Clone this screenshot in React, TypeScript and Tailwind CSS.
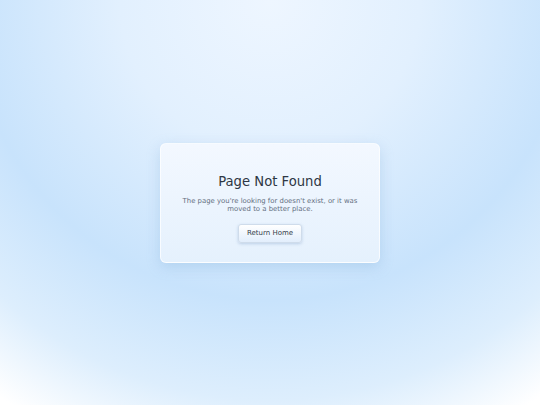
import * as React from "react";

/** 404 page — a single frosted card over a soft blue radial wash. */
export default function App() {
  return (
    <div className="flex min-h-screen w-full items-center justify-center bg-[radial-gradient(circle_at_50%_0%,#eef6ff_0px,#e2f0fe_150px,#c8e3fc_300px,#ddeefd_400px,#ffffff_480px)] font-['DejaVu_Sans',sans-serif]">
      <div className="flex w-[220px] flex-col items-center rounded-[6px] border border-white/70 bg-[linear-gradient(180deg,#f3f8ff_0%,#e5f1fd_100%)] px-4 pt-[30px] pb-[19px] text-center shadow-[0_4px_14px_rgba(110,160,210,0.28)]">
        <h1 className="text-[13.2px] leading-[16px] font-normal text-[#2e3744]">Page Not Found</h1>
        <p className="mt-[7px] text-[6.9px] leading-[8.5px] text-[#646f7e]">
          The page you're looking for doesn't exist, or it was
          <br />
          moved to a better place.
        </p>
        <button
          type="button"
          className="mt-[10px] h-[19px] w-[64px] rounded-[3px] border border-[#cfdceb] bg-[linear-gradient(180deg,#ffffff_0%,#e2eefc_100%)] text-[7px] text-[#333e4c] shadow-[0_1px_3px_rgba(90,130,180,0.3)]"
        >
          Return Home
        </button>
      </div>
    </div>
  );
}
